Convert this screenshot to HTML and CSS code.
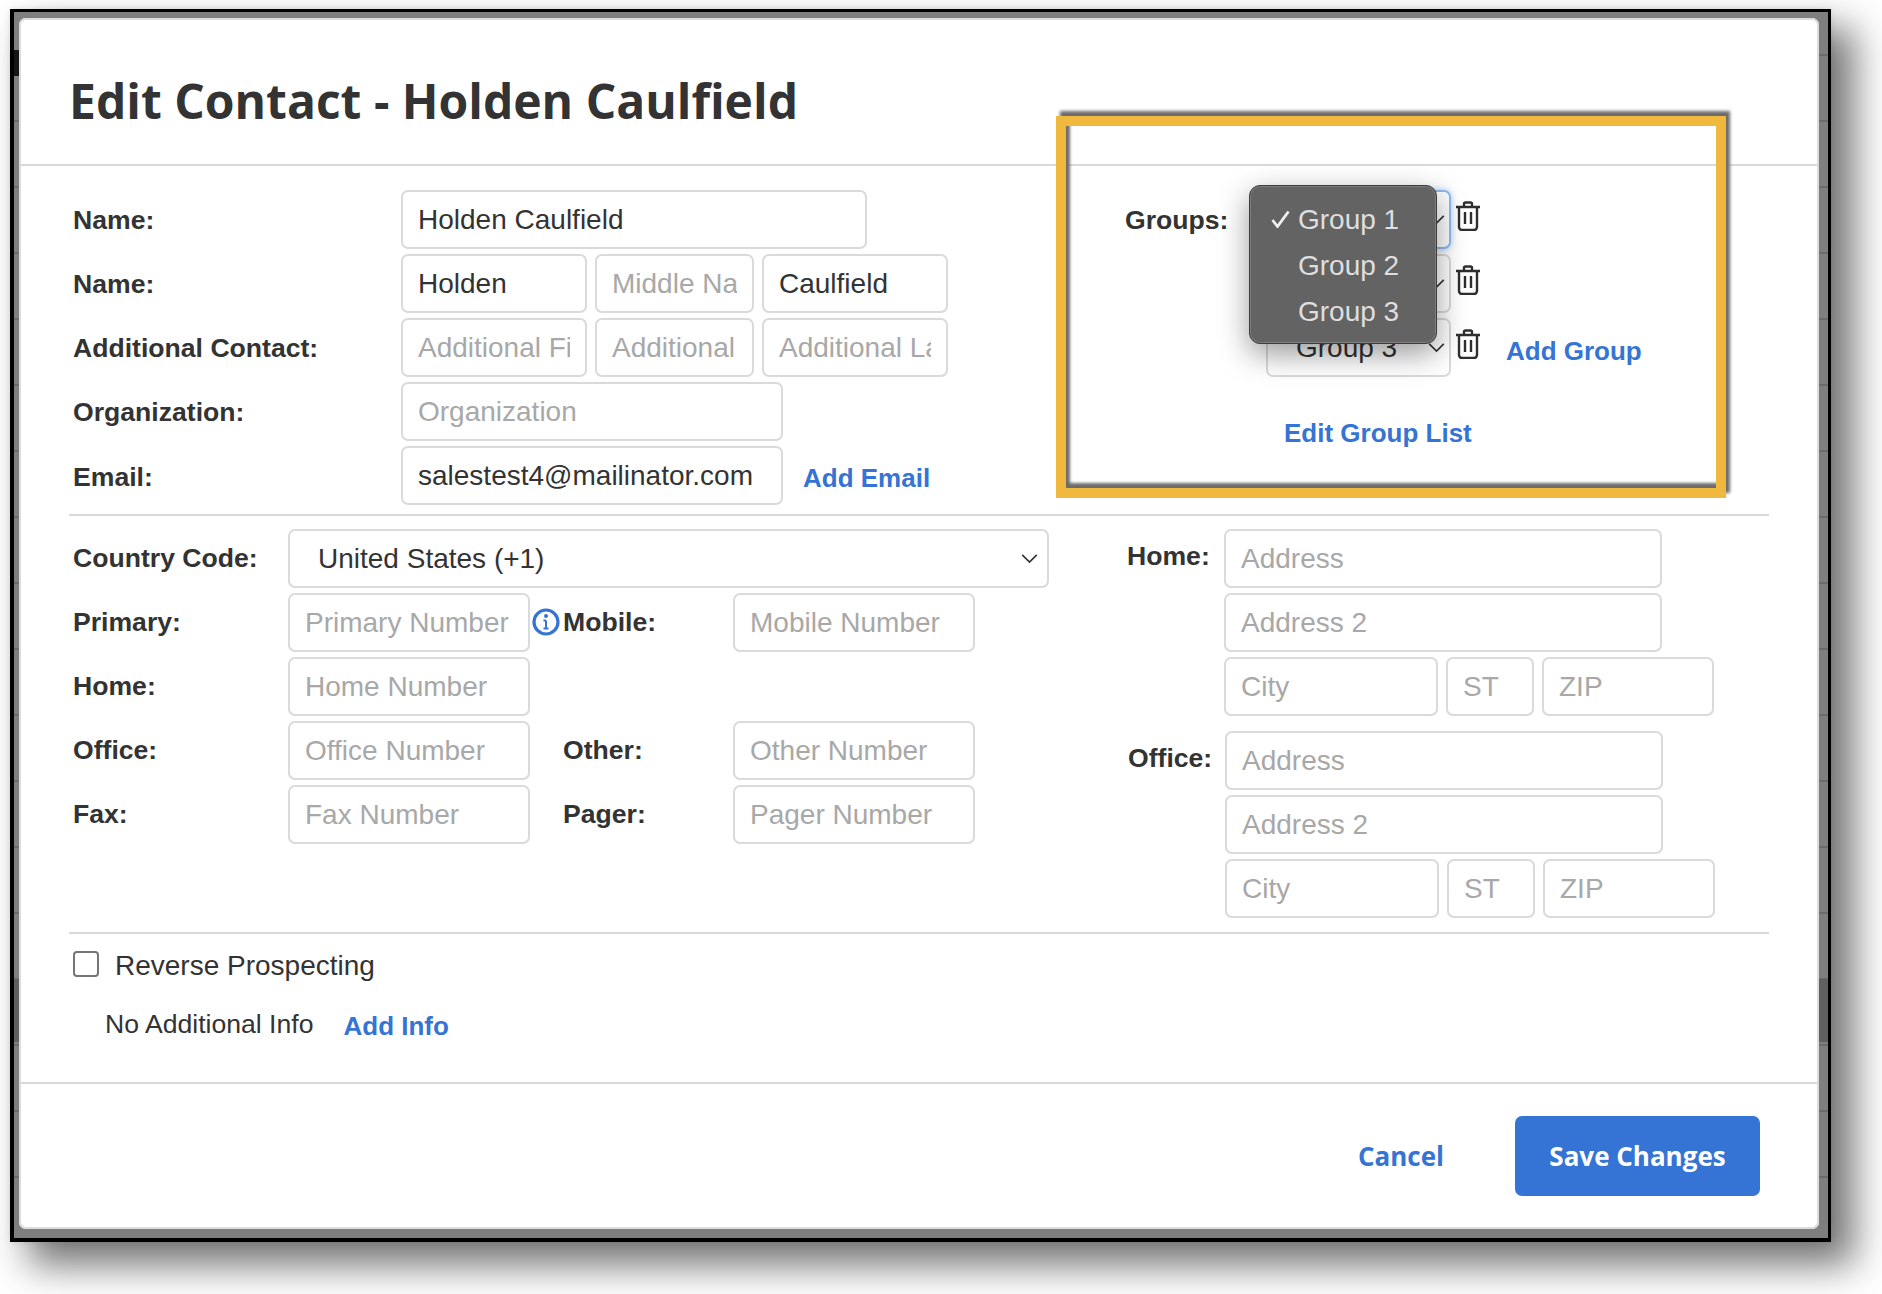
FILE: index.html
```html
<!DOCTYPE html>
<html>
<head>
	<meta charset="UTF-8" />
	<title>Edit Contact</title>
	<link rel="stylesheet" href="styles.css">
</head>
<body>
	<div class="frame">
		<div class="modal">
			<!-- Header -->
			<div class="modal-header">
				<h1 class="modal-title">Edit Contact - Holden Caulfield</h1>
			</div>

			<!-- Name and groups -->
			<div class="top-section">
				<div class="contact-col">
					<div class="row">
						<label class="label label-name">Name:</label>
						<input class="field w-full-name" type="text" value="Holden Caulfield" />
					</div>
					<div class="row">
						<label class="label label-name">Name:</label>
						<input class="field w-first" type="text" value="Holden" />
						<input class="field w-middle" type="text" placeholder="Middle Name" />
						<input class="field w-last" type="text" value="Caulfield" />
					</div>
					<div class="row">
						<label class="label label-name">Additional Contact:</label>
						<input class="field w-first" type="text" placeholder="Additional First Name" />
						<input class="field w-middle" type="text" placeholder="Additional Middle" />
						<input class="field w-last" type="text" placeholder="Additional Last Name" />
					</div>
					<div class="row">
						<label class="label label-name">Organization:</label>
						<input class="field w-org" type="text" placeholder="Organization" />
					</div>
					<div class="row">
						<label class="label label-name label-email">Email:</label>
						<input class="field w-org" type="text" value="salestest4@mailinator.com" />
						<a class="link add-email" href="#">Add Email</a>
					</div>
				</div>

				<div class="groups">
					<div class="row">
						<label class="label label-groups">Groups:</label>
						<div class="select group-select focused">
							<svg class="chevron" viewBox="0 0 18 11"><path d="M1 1l8 8 8-8" /></svg>
						</div>
						<svg class="trash" viewBox="0 0 26 30"><path d="M9 5V3a1.5 1.5 0 0 1 1.5-1.5h5A1.5 1.5 0 0 1 17 3v2M1 6h24M4 6v20a3 3 0 0 0 3 3h12a3 3 0 0 0 3-3V6M10 11v12M16 11v12" /></svg>
					</div>
					<div class="row">
						<div class="label-groups"></div>
						<div class="select group-select">
							<svg class="chevron" viewBox="0 0 18 11"><path d="M1 1l8 8 8-8" /></svg>
						</div>
						<svg class="trash" viewBox="0 0 26 30"><path d="M9 5V3a1.5 1.5 0 0 1 1.5-1.5h5A1.5 1.5 0 0 1 17 3v2M1 6h24M4 6v20a3 3 0 0 0 3 3h12a3 3 0 0 0 3-3V6M10 11v12M16 11v12" /></svg>
					</div>
					<div class="row">
						<div class="label-groups"></div>
						<div class="select group-select">
							<span>Group 3</span>
							<svg class="chevron" viewBox="0 0 18 11"><path d="M1 1l8 8 8-8" /></svg>
						</div>
						<svg class="trash" viewBox="0 0 26 30"><path d="M9 5V3a1.5 1.5 0 0 1 1.5-1.5h5A1.5 1.5 0 0 1 17 3v2M1 6h24M4 6v20a3 3 0 0 0 3 3h12a3 3 0 0 0 3-3V6M10 11v12M16 11v12" /></svg>
						<a class="link add-group" href="#">Add Group</a>
					</div>
					<a class="link edit-groups" href="#">Edit Group List</a>

					<!-- Open dropdown -->
					<div class="menu">
						<div class="menu-item">
							<svg class="menu-check" viewBox="0 0 19 18"><path d="M1.5 10l5 6.5L17.5 1.5" /></svg>
							Group 1
						</div>
						<div class="menu-item">Group 2</div>
						<div class="menu-item">Group 3</div>
					</div>
				</div>
			</div>

			<!-- Phones and addresses -->
			<div class="mid-section">
				<div class="phones">
					<div class="row">
						<label class="label label-phone">Country Code:</label>
						<div class="select country-select">
							<span>United States (+1)</span>
							<svg class="chevron" viewBox="0 0 18 11"><path d="M1 1l8 8 8-8" /></svg>
						</div>
					</div>
					<div class="row">
						<label class="label label-phone">Primary:</label>
						<input class="field w-phone" type="text" placeholder="Primary Number" />
						<div class="icon-slot">
							<svg class="info" viewBox="0 0 28 28">
								<circle cx="14" cy="14" r="12" />
								<path d="M14 12.5v8M11.5 12.5H14M11.5 20.5h5" />
								<circle class="info-dot" cx="14" cy="8" r="2" />
							</svg>
						</div>
						<label class="label label-phone2">Mobile:</label>
						<input class="field w-phone2" type="text" placeholder="Mobile Number" />
					</div>
					<div class="row">
						<label class="label label-phone">Home:</label>
						<input class="field w-phone" type="text" placeholder="Home Number" />
					</div>
					<div class="row">
						<label class="label label-phone">Office:</label>
						<input class="field w-phone" type="text" placeholder="Office Number" />
						<div class="icon-slot"></div>
						<label class="label label-phone2">Other:</label>
						<input class="field w-phone2" type="text" placeholder="Other Number" />
					</div>
					<div class="row">
						<label class="label label-phone">Fax:</label>
						<input class="field w-phone" type="text" placeholder="Fax Number" />
						<div class="icon-slot"></div>
						<label class="label label-phone2">Pager:</label>
						<input class="field w-phone2" type="text" placeholder="Pager Number" />
					</div>
				</div>

				<div class="addresses">
					<div class="address">
						<label class="label label-address">Home:</label>
						<div class="address-fields">
							<input class="field w-address" type="text" placeholder="Address" />
							<input class="field w-address" type="text" placeholder="Address 2" />
							<div class="city-row">
								<input class="field w-city" type="text" placeholder="City" />
								<input class="field w-state" type="text" placeholder="ST" />
								<input class="field w-zip" type="text" placeholder="ZIP" />
							</div>
						</div>
					</div>
					<div class="address address-office">
						<label class="label label-address">Office:</label>
						<div class="address-fields">
							<input class="field w-address" type="text" placeholder="Address" />
							<input class="field w-address" type="text" placeholder="Address 2" />
							<div class="city-row">
								<input class="field w-city" type="text" placeholder="City" />
								<input class="field w-state" type="text" placeholder="ST" />
								<input class="field w-zip" type="text" placeholder="ZIP" />
							</div>
						</div>
					</div>
				</div>
			</div>

			<!-- Extras -->
			<div class="extra-section">
				<div class="reverse">
					<span class="checkbox"></span>
					<span>Reverse Prospecting</span>
				</div>
				<div class="info-row">
					<span>No Additional Info</span>
					<a class="link add-info" href="#">Add Info</a>
				</div>
			</div>

			<!-- Footer -->
			<div class="modal-footer">
				<a class="cancel" href="#">Cancel</a>
				<a class="save" href="#">Save Changes</a>
			</div>

			<!-- Annotation -->
			<div class="callout"></div>
		</div>
	</div>
</body>
</html>
```

FILE: styles.css
```css
body{
	margin: 0;
	height: 1294px;
	overflow: hidden;
	background: #ffffff;
	font-family: "Liberation Sans", Arial, sans-serif;
	font-size: 26.6px;
	color: #333333;
}

.frame{
	box-sizing: border-box;
	width: 1821px;
	height: 1233px;
	margin: 9px 0 0 10px;
	padding: 6px 9px 9px 5px;
	background-color: #7f7f7f;
	background-image:
		linear-gradient(#161616, #161616),
		linear-gradient(#606060, #606060),
		repeating-linear-gradient(to bottom, #6b6b6b 0, #6b6b6b 2px, transparent 2px, transparent 66px);
	background-size: 5px 26px, 100% 63px, 100% 66px;
	background-position: 0 38px, 0 967px, 0 42px;
	background-repeat: no-repeat, no-repeat, repeat-y;
	border: solid #000000;
	border-width: 3px 3px 4px 4px;
	box-shadow: 21px 21px 36px 2px rgba(0,0,0,0.55), 0 0 6px rgba(0,0,0,0.1);
}

.modal{
	position: relative;
	box-sizing: border-box;
	width: 1800px;
	height: 1211px;
	background: #ffffff;
	border-radius: 7px;
	box-shadow: inset 0 0 0 2px #dcdcdc;
}

.modal-header{
	box-sizing: border-box;
	height: 148px;
	padding: 51px 0 0 50px;
	border-bottom: 2px solid #d9d9d9;
}

.modal-title{
	margin: 0;
	font-family: "Open Sans", sans-serif;
	font-size: 48px;
	line-height: 64px;
	font-weight: 700;
	color: #333333;
}

.row{
	display: flex;
	align-items: center;
	height: 59px;
	margin-bottom: 5px;
}

.label{
	font-weight: bold;
	color: #333333;
}

.label-name{
	width: 328px;
	padding-top: 1px;
}

.label-email{
	padding-top: 3px;
}

.field{
	box-sizing: border-box;
	height: 59px;
	padding: 0 15px;
	font-family: "Liberation Sans", Arial, sans-serif;
	font-size: 28px;
	color: #333333;
	background: #ffffff;
	border: 2px solid #dadada;
	border-radius: 7px;
	outline: none;
}

.field::placeholder{
	color: #a8a8a8;
	opacity: 1;
}

.w-full-name{ width: 466px; }
.w-first{ width: 186px; margin-right: 8px; }
.w-middle{ width: 159px; margin-right: 8px; }
.w-last{ width: 186px; }
.w-org{ width: 382px; }
.w-phone{ width: 242px; }
.w-phone2{ width: 242px; }
.w-address{ width: 438px; }
.w-city{ width: 214px; }
.w-state{ width: 88px; }
.w-zip{ width: 172px; }

.link{
	font-size: 26px;
	font-weight: bold;
	color: #3574d4;
	text-decoration: none;
}

.add-email{
	margin: 5px 0 0 20px;
}

/* Name and groups */
.top-section{
	display: flex;
	height: 348px;
	box-sizing: border-box;
	padding: 24px 0 0 54px;
}

.contact-col{
	width: 1052px;
}

.groups{
	position: relative;
}

.label-groups{
	width: 141px;
	padding-top: 1px;
}

.select{
	display: flex;
	align-items: center;
	justify-content: space-between;
	box-sizing: border-box;
	height: 59px;
	font-size: 28px;
	background: #ffffff;
	border: 2px solid #dadada;
	border-radius: 7px;
}

.chevron{
	width: 17px;
	height: 10px;
	margin-left: auto;
	fill: none;
	stroke: #333333;
	stroke-width: 1.8;
}

.group-select{
	width: 185px;
	padding: 0 4px 0 28px;
}

.group-select.focused{
	border-color: #8dbbf2;
	box-shadow: 0 0 6px rgba(80,150,240,0.45);
}

.trash{
	width: 26px;
	height: 30px;
	margin: -8px 0 0 4px;
	fill: none;
	stroke: #2e2e2e;
	stroke-width: 2.4;
	flex-shrink: 0;
}

.add-group{
	margin: 7px 0 0 25px;
}

.edit-groups{
	display: block;
	margin: 41px 0 0 159px;
	line-height: 30px;
}

.menu{
	position: absolute;
	left: 124px;
	top: -5px;
	box-sizing: border-box;
	width: 188px;
	height: 159px;
	padding: 11px 0 0 0;
	background: #636363;
	border: 1px solid #3d3d3d;
	border-radius: 11px;
	box-shadow: inset 0 0 0 1px #7d7d7d, 0 10px 30px rgba(0,0,0,0.4);
	color: #dedede;
	font-size: 28px;
}

.menu-item{
	position: relative;
	height: 46px;
	line-height: 46px;
	padding-left: 48px;
}

.menu-check{
	position: absolute;
	left: 21px;
	top: 13px;
	width: 19px;
	height: 18px;
	fill: none;
	stroke: #f0f0f0;
	stroke-width: 2.8;
}

/* Phones and addresses */
.mid-section{
	display: flex;
	box-sizing: border-box;
	height: 418px;
	margin: 0 50px 0 50px;
	padding: 13px 0 0 4px;
	border-top: 2px solid #d9d9d9;
}

.phones{
	width: 1054px;
}

.label-phone{
	width: 215px;
}

.country-select{
	width: 761px;
	padding: 0 9px 0 28px;
}

.icon-slot{
	display: flex;
	align-items: center;
	width: 33px;
	padding-left: 2px;
	box-sizing: border-box;
}

.info{
	width: 28px;
	height: 28px;
	margin-top: -2px;
	fill: none;
	stroke: #3574d4;
	stroke-width: 3.2;
}

.info path{
	stroke-width: 2;
}

.info-dot{
	fill: #3574d4;
	stroke: none;
}

.label-phone2{
	width: 170px;
}

.address{
	display: flex;
}

.address-office{
	margin: 15px 0 0 1px;
}

.label-address{
	width: 97px;
	height: 59px;
	line-height: 55px;
}

.address-fields{
	display: flex;
	flex-direction: column;
	gap: 5px;
}

.city-row{
	display: flex;
	gap: 8px;
}

/* Extras */
.extra-section{
	box-sizing: border-box;
	height: 150px;
	margin: 0 50px;
	padding: 15px 0 0 4px;
	border-top: 2px solid #d9d9d9;
}

.reverse{
	display: flex;
	align-items: center;
	height: 34px;
	font-size: 28px;
}

.checkbox{
	box-sizing: border-box;
	width: 26px;
	height: 26px;
	margin: -5px 16px 0 0;
	background: #ffffff;
	border: 2px solid #757575;
	border-radius: 4px;
}

.info-row{
	display: flex;
	align-items: center;
	height: 34px;
	margin-top: 24px;
	padding-left: 32px;
}

.add-info{
	margin: 4px 0 0 30px;
}

.modal-footer{
	display: flex;
	align-items: center;
	justify-content: flex-end;
	box-sizing: border-box;
	height: 145px;
	padding: 0 59px 0 0;
	border-top: 2px solid #d9d9d9;
	font-family: "Open Sans", sans-serif;
	font-size: 26px;
	font-weight: 700;
}

.cancel{
	margin-right: 71px;
	color: #3574d4;
	text-decoration: none;
}

.save{
	box-sizing: border-box;
	width: 245px;
	height: 80px;
	line-height: 80px;
	text-align: center;
	color: #ffffff;
	background: #3574d4;
	border-radius: 7px;
	text-decoration: none;
}

/* Annotation box */
.callout{
	position: absolute;
	left: 1037px;
	top: 98px;
	box-sizing: border-box;
	width: 670px;
	height: 382px;
	border: 10px solid #f0b93e;
	box-shadow: 4px -5px 3px #6c6c6c, inset 4px -5px 3px #6c6c6c;
	pointer-events: none;
}
```
